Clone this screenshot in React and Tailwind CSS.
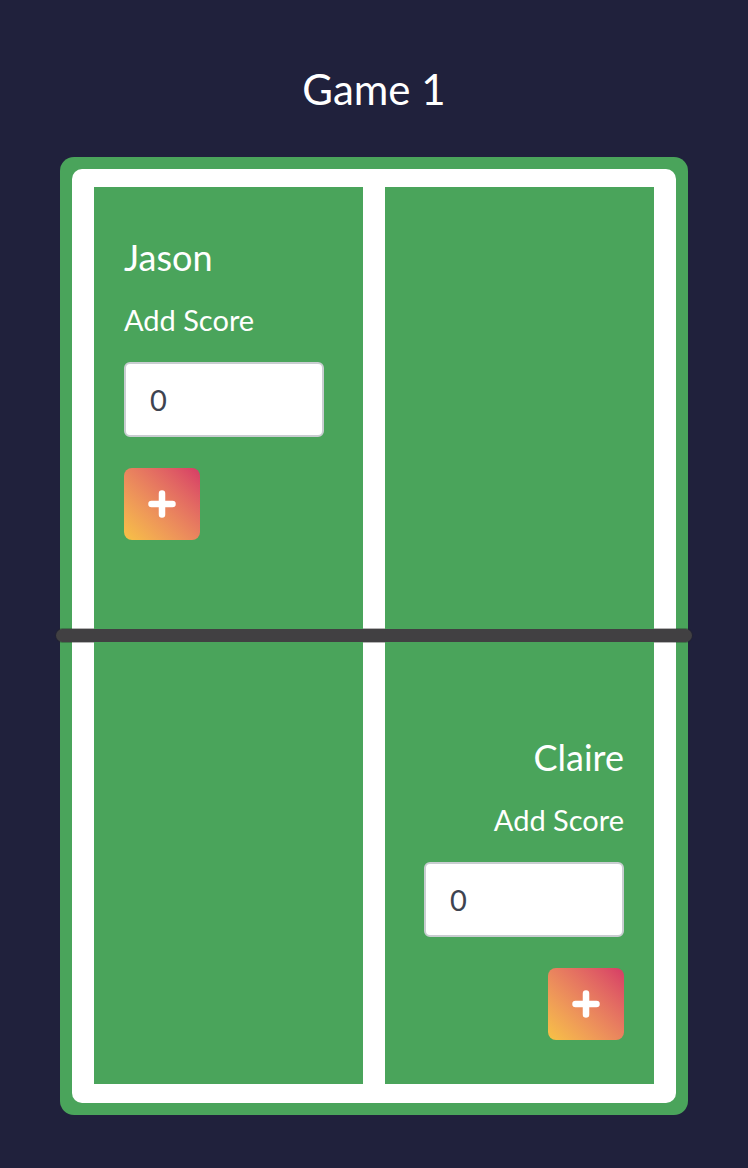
import React from "react";

function PlusButton() {
  return (
    <button
      type="button"
      className="flex h-[72px] w-[76px] items-center justify-center rounded-[8px] bg-gradient-to-tr from-[#f7c244] to-[#d63a66]"
    >
      <svg width="30" height="30" viewBox="0 0 30 30" fill="none">
        <path d="M15 4.5V25.5M4.5 15H25.5" stroke="white" strokeWidth="6.5" strokeLinecap="round" />
      </svg>
    </button>
  );
}

function Player({ name, align }) {
  const right = align === "right";
  return (
    <div className={`flex flex-col ${right ? "items-end" : "items-start"}`}>
      <div className="text-[36px] leading-[42px] text-white">{name}</div>
      <div className="mt-[26px] text-[29px] leading-[32px] text-white">Add Score</div>
      <div className="mt-[26px] flex h-[75px] w-[200px] items-center rounded-[6px] border-2 border-[#c9cdd1] bg-white pl-[24px] text-[29px] text-[#3e4350]">
        0
      </div>
      <div className="mt-[31px]">
        <PlusButton />
      </div>
    </div>
  );
}

export default function App() {
  return (
    <div
      className="min-h-[1168px] w-full bg-[#20213c] pb-[53px]"
      style={{ fontFamily: "Lato, 'Open Sans', sans-serif" }}
    >
      <h1 className="pt-[64px] text-center text-[42px] leading-[50px] text-white">Game 1</h1>
      <div className="mx-auto mt-[43px] w-[628px] rounded-[14px] bg-[#4aa45b] p-[12px]">
        <div className="rounded-[10px] bg-white px-[22px] pb-[19px] pt-[18px]">
          <div className="grid h-[442px] grid-cols-2 gap-[22px]">
            <div className="bg-[#4aa45b] px-[30px] pt-[49px]">
              <Player name="Jason" align="left" />
            </div>
            <div className="bg-[#4aa45b]" />
          </div>
          <div className="-mx-[38px] h-[13px] rounded-full bg-[#414042] shadow-[0_0_0_1px_rgba(40,40,40,0.35)]" />
          <div className="grid h-[442px] grid-cols-2 gap-[22px]">
            <div className="bg-[#4aa45b]" />
            <div className="flex flex-col justify-end bg-[#4aa45b] px-[30px] pb-[44px]">
              <Player name="Claire" align="right" />
            </div>
          </div>
        </div>
      </div>
    </div>
  );
}
